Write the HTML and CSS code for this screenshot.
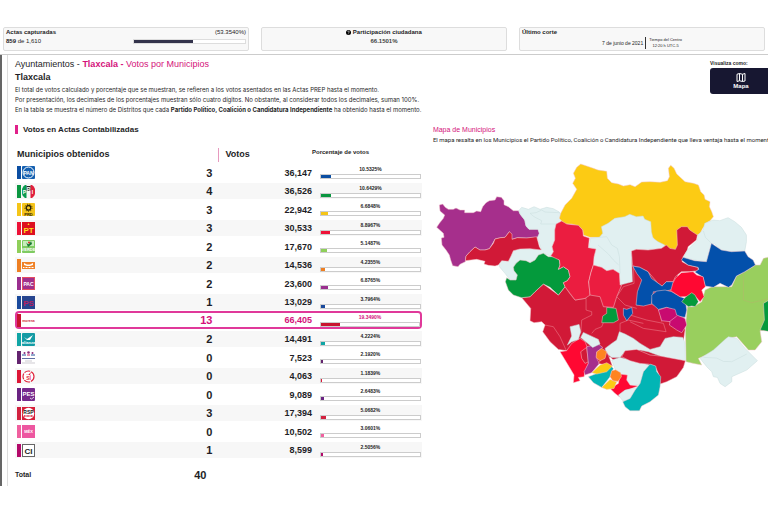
FILE: index.html
```html
<!DOCTYPE html>
<html lang="es">
<head>
    <meta charset="UTF-8">
    <meta name="viewport" content="width=device-width, initial-scale=1.0">
    <title>PREP Tlaxcala - Ayuntamientos</title>
    <link rel="stylesheet" href="styles.css">
</head>
<body>
    <header class="top-bar">
        <section class="card">
            <div class="card-row"><strong>Actas capturadas</strong><span>(53.3540%)</span></div>
            <div class="card-row">
                <span><strong>859</strong> de 1,610</span>
                <div class="progress"><div class="progress-fill" style="width: 53%"></div></div>
            </div>
        </section>
        <section class="card card-center">
            <strong><svg class="help" viewBox="0 0 12 12"><circle cx="6" cy="6" r="6"/><path d="M4 4.6c0-2.6 4-2.6 4 0C8 6 6 6 6 7.6M6 8.6v1.4" fill="none" stroke="#fff" stroke-width="1.5"/></svg> Participación ciudadana</strong>
            <strong class="soft">66.1501%</strong>
        </section>
        <section class="card">
            <strong>Último corte</strong>
            <div class="cut">
                <span>7 de junio de 2021</span>
                <span class="cut-time">Tiempo del Centro<br>12:20 h UTC-5</span>
            </div>
        </section>
    </header>

    <main class="page">
        <div class="content">
            <div class="intro">
                <div>
                    <h1>Ayuntamientos - <a href="#"><b>Tlaxcala -</b> Votos por Municipios</a></h1>
                    <h2>Tlaxcala</h2>
                    <p>El total de votos calculado y porcentaje que se muestran, se refieren a los votos asentados en las Actas PREP hasta el momento.</p>
                    <p>Por presentación, los decimales de los porcentajes muestran sólo cuatro dígitos. No obstante, al considerar todos los decimales, suman 100%.</p>
                    <p>En la tabla se muestra el número de Distritos que cada <b>Partido Político, Coalición o Candidatura Independiente</b> ha obtenido hasta el momento.</p>
                </div>
                <div class="view-as">
                    <span>Visualiza como:</span>
                    <button type="button" class="map-btn">
                        <svg viewBox="0 0 20 18" fill="none" stroke="#fff" stroke-width="2"><path d="M2 2.5 7 1l6 1.5L18 1v15l-5 1-6-1.500-5 1.500zM7 1v14.500M13 2.500v14.500"/></svg>
                        Mapa
                    </button>
                </div>
            </div>

            <div class="columns">
                <section>
                    <h3>Votos en Actas Contabilizadas</h3>
                    <table class="votes">
                        <colgroup><col class="col-party"><col class="col-won"><col class="col-total"><col></colgroup>
                        <thead>
                            <tr><th colspan="2">Municipios obtenidos</th><th class="th-votes">Votos</th><th class="th-pct">Porcentaje de votos</th></tr>
                        </thead>
                        <tbody>
                            <tr class="pan">
                                <td class="party"><i class="tag"></i><svg class="logo" viewBox="0 0 13 13"><rect width="13" height="13" rx="1" fill="#1560b0"/><circle cx="6.500" cy="6.500" r="5.500" fill="#1560b0" stroke="#fff"/><text x="6.500" y="8.500" font-size="5" fill="#fff">PAN</text></svg></td>
                                <td class="won">3</td><td class="total">36,147</td>
                                <td class="share"><span>10.5325%</span><div class="bar"><div class="fill" style="width: 10.5%"></div></div></td>
                            </tr>
                            <tr class="pri">
                                <td class="party"><i class="tag"></i><svg class="logo" viewBox="0 0 13 13"><path d="M4.500 0H3a8 8 0 0 0 0 13h1.500z" fill="#0a9b50"/><path d="M8.500 0H10a8 8 0 0 1 0 13H8.500z" fill="#e0203c"/><path d="M4.500 1h4v5h-4z" fill="#222"/><text x="2.500" y="9" font-size="5" fill="#fff">P</text><text x="6.500" y="5.500" font-size="5" fill="#fff">R</text><text x="10.500" y="9" font-size="5" fill="#fff">I</text></svg></td>
                                <td class="won">4</td><td class="total">36,526</td>
                                <td class="share"><span>10.6429%</span><div class="bar"><div class="fill" style="width: 10.6%"></div></div></td>
                            </tr>
                            <tr class="prd">
                                <td class="party"><i class="tag"></i><svg class="logo" viewBox="0 0 13 13"><rect width="13" height="13" rx="1" fill="#f5c41c"/><circle cx="6.500" cy="4.800" r="2.300" fill="none" stroke="#2c2408" stroke-width="1.300"/><circle cx="6.500" cy="4.800" r="3.600" fill="none" stroke="#2c2408" stroke-width="1" stroke-dasharray="1 1.500"/><text x="6.500" y="12.500" font-size="4" fill="#2c2408">PRD</text></svg></td>
                                <td class="won">3</td><td class="total">22,942</td>
                                <td class="share"><span>6.6848%</span><div class="bar"><div class="fill" style="width: 6.6%"></div></div></td>
                            </tr>
                            <tr class="pt">
                                <td class="party"><i class="tag"></i><svg class="logo" viewBox="0 0 13 13"><rect width="13" height="13" fill="#dd1020"/><path d="m6.500 1 1 2h-2z" fill="#ffdf20"/><text x="6.500" y="10.500" font-size="8" fill="#ffdf20">PT</text></svg></td>
                                <td class="won">3</td><td class="total">30,533</td>
                                <td class="share"><span>8.8967%</span><div class="bar"><div class="fill" style="width: 8.9%"></div></div></td>
                            </tr>
                            <tr class="pvem">
                                <td class="party"><i class="tag"></i><svg class="logo" viewBox="0 0 13 13"><rect width="13" height="13" rx="1" fill="#7fcb62"/><path d="M1 1h11v5H1z" fill="#c7edbb"/><path d="M4 2c2 3 3 3 5-1l1 3-4 3z" fill="#187a32"/><circle cx="7" cy="2.500" r="1" fill="#d22"/><text x="6.500" y="11" font-size="4" fill="#fff">VERDE</text></svg></td>
                                <td class="won">2</td><td class="total">17,670</td>
                                <td class="share"><span>5.1487%</span><div class="bar"><div class="fill" style="width: 5.6%"></div></div></td>
                            </tr>
                            <tr class="mc">
                                <td class="party"><i class="tag"></i><svg class="logo" viewBox="0 0 13 13"><rect y="3" width="13" height="7" fill="#f08228"/><path d="m2 4 3 1.500h3L11 4v2L8 7H5L2 6z" fill="#fff"/><path d="M1 8.500h11" stroke="#fff" stroke-dasharray="1 .5"/></svg></td>
                                <td class="won">2</td><td class="total">14,536</td>
                                <td class="share"><span>4.2355%</span><div class="bar"><div class="fill" style="width: 4.2%"></div></div></td>
                            </tr>
                            <tr class="pac">
                                <td class="party"><i class="tag"></i><svg class="logo" viewBox="0 0 13 13"><rect x=".5" y=".5" width="12" height="12" fill="#a0308c" stroke="#e44b62"/><text x="6.500" y="8.500" font-size="5" fill="#fff">PAC</text></svg></td>
                                <td class="won">2</td><td class="total">23,600</td>
                                <td class="share"><span>6.8765%</span><div class="bar"><div class="fill" style="width: 7%"></div></div></td>
                            </tr>
                            <tr class="ps">
                                <td class="party"><i class="tag"></i><svg class="logo" viewBox="0 0 13 13"><rect width="13" height="13" fill="#27458f"/><text x="6.500" y="9.500" font-size="8" fill="#b81f60">PS</text></svg></td>
                                <td class="won">1</td><td class="total">13,029</td>
                                <td class="share"><span>3.7964%</span><div class="bar"><div class="fill" style="width: 4%"></div></div></td>
                            </tr>
                            <tr class="morena leader">
                                <td class="party"><i class="tag"></i><svg class="logo" viewBox="0 0 13 13"><text x="6.500" y="8" font-size="3.500" fill="#d01c38">morena</text></svg></td>
                                <td class="won">13</td><td class="total">66,405</td>
                                <td class="share"><span>19.3490%</span><div class="bar"><div class="fill" style="width: 19.3%"></div></div></td>
                            </tr>
                            <tr class="na">
                                <td class="party"><i class="tag"></i><svg class="logo" viewBox="0 0 13 13"><rect width="13" height="13" rx="1" fill="#149ba4"/><path d="m2 4 3 2 6-4-3 5H5z" fill="#fff"/><text x="6.500" y="11" font-size="4" fill="#fff">alianza</text></svg></td>
                                <td class="won">2</td><td class="total">14,491</td>
                                <td class="share"><span>4.2224%</span><div class="bar"><div class="fill" style="width: 4.2%"></div></div></td>
                            </tr>
                            <tr class="iscc">
                                <td class="party"><i class="tag"></i><svg class="logo" viewBox="0 0 13 13"><g fill="#8c2c7c"><circle cx="2.500" cy="2" r="1"/><circle cx="6.500" cy="1.500" r="1.300"/><circle cx="10.500" cy="2" r="1"/></g><path d="M0 4h4M9 4h4" stroke="#23509a"/><path d="M5 4h3" stroke="#d02060"/><path d="M0 7.500h13" stroke="#6270a4"/><path d="M3 10h7M0 12h13" stroke="#b9b4bd" stroke-width=".7"/></svg></td>
                                <td class="won">0</td><td class="total">7,523</td>
                                <td class="share"><span>2.1920%</span><div class="bar"><div class="fill" style="width: 2.2%"></div></div></td>
                            </tr>
                            <tr class="rsp">
                                <td class="party"><i class="tag"></i><svg class="logo" viewBox="0 0 13 13"><circle cx="6.500" cy="6.500" r="5.500" fill="#fff" stroke="#e0243c" stroke-width="1.200" stroke-dasharray="6 1"/><path d="m4 4 2 1 3-3-1 3H5z" fill="#e0243c"/><text x="6.500" y="9.800" font-size="5" fill="#e0243c">SÍ</text></svg></td>
                                <td class="won">0</td><td class="total">4,063</td>
                                <td class="share"><span>1.1839%</span><div class="bar"><div class="fill" style="width: 1.3%"></div></div></td>
                            </tr>
                            <tr class="pes">
                                <td class="party"><i class="tag"></i><svg class="logo" viewBox="0 0 13 13"><rect width="13" height="13" rx="1" fill="#762a8c"/><text x="6.500" y="8" font-size="6" fill="#fff">PES</text><path d="m8 10 1.500 1L12 9" fill="none" stroke="#fff" stroke-width=".8"/></svg></td>
                                <td class="won">0</td><td class="total">9,089</td>
                                <td class="share"><span>2.6483%</span><div class="bar"><div class="fill" style="width: 2.6%"></div></div></td>
                            </tr>
                            <tr class="redes">
                                <td class="party"><i class="tag"></i><svg class="logo" viewBox="0 0 13 13"><rect width="13" height="13" fill="#d8203a"/><circle cx="6.500" cy="6.500" r="5.700" fill="#fff"/><text x="6.500" y="6.500" font-size="5" fill="#222">RSP</text><path d="M2 9h9" stroke="#d8203a" stroke-width="1.500" stroke-dasharray="1 .4"/></svg></td>
                                <td class="won">3</td><td class="total">17,394</td>
                                <td class="share"><span>5.0682%</span><div class="bar"><div class="fill" style="width: 5%"></div></div></td>
                            </tr>
                            <tr class="fxm">
                                <td class="party"><i class="tag"></i><svg class="logo" viewBox="0 0 13 13"><rect width="13" height="13" fill="#ed57a0"/><text x="6.500" y="8" font-size="4" fill="#fff">MÉX</text></svg></td>
                                <td class="won">0</td><td class="total">10,502</td>
                                <td class="share"><span>3.0601%</span><div class="bar"><div class="fill" style="width: 3.2%"></div></div></td>
                            </tr>
                            <tr class="ci">
                                <td class="party"><i class="tag"></i><svg class="logo" viewBox="0 0 13 13"><rect x=".5" y=".5" width="12" height="12" fill="#fff" stroke="#666"/><text x="6.500" y="9.500" font-size="8" fill="#222">CI</text></svg></td>
                                <td class="won">1</td><td class="total">8,599</td>
                                <td class="share"><span>2.5056%</span><div class="bar"><div class="fill" style="width: 2.5%"></div></div></td>
                            </tr>
                        </tbody>
                        <tfoot>
                            <tr><th>Total</th><td class="won">40</td><td></td><td></td></tr>
                        </tfoot>
                    </table>
                </section>

                <section class="map-panel">
                    <h4>Mapa de Municipios</h4>
                    <p>El mapa resalta en los Municipios el Partido Político, Coalición o Candidatura Independiente que lleva ventaja hasta el momento.</p>
                    <svg class="map" viewBox="9 0 1005 795" role="img" aria-label="Mapa de Municipios">
                        <!-- central municipalities -->
                        <path class="m-dark" d="M275 443 302 475 300 512 312 518 335 515 345 525 338 545 360 575 385 598 410 602 450 640 480 660 540 620 560 640 680 650 750 640 762 560 765 540 750 400 720 300 605 300 600 395 480 400 405 410 385 435 340 402 315 425 300 440z"/>
                        <path class="m-dark line" d="M405 410 420 432 435 450 468 445 468 480 485 485 485 495 455 510 452 550M485 550 495 538 515 530 520 518M345 525 370 530 390 560 408 600M560 440 585 465 620 475M570 545 570 520 595 510 640 520M620 465 650 458 685 470 695 515M600 495 650 510 700 520 708 545 640 535 600 515M610 348 612 400 580 410 560 440"/>
                        <!-- north -->
                        <path class="m-purple" d="M28 165 38 162 46 172 55 178 70 178 78 174 90 180 104 180 104 188 130 188 140 183 152 185 158 170 168 158 178 152 195 150 200 140 214 142 222 152 222 164 235 170 250 182 266 182 270 192 284 210 288 228 297 238 324 238 328 250 326 262 290 264 262 263 246 268 238 245 225 262 212 263 195 267 188 280 178 296 165 300 150 300 135 291 120 305 108 318 106 335 90 343 84 350 68 347 62 330 58 315 48 300 36 285 34 264 42 262 40 250 20 232 28 220 40 205 44 195 30 183z"/>
                        <path class="m-pale" d="M266 182 275 172 295 178 312 170 330 178 350 172 370 176 388 186 398 205 400 216 378 222 374 240 374 270 366 290 370 305 362 318 340 310 328 316 315 330 300 338 270 330 255 340 250 355 262 375 258 390 240 390 225 370 208 350 207 330 235 330 243 318 250 302 270 297 334 298 322 262 328 250 324 238 297 238 288 228 284 210 270 192z"/>
                        <path class="m-pale line" d="M388 188 345 186 335 180 318 188 300 190 312 200 335 212 332 222 385 222"/>
                        <path class="m-dark" d="M106 332 108 318 120 305 135 291 150 300 165 300 178 296 190 280 195 267 212 263 225 262 238 245 246 252 246 268 262 263 290 264 320 260 324 275 328 290 334 300 300 296 270 297 250 302 243 318 235 334 215 332 205 345 195 348 175 346 162 342 165 334 140 328z"/>
                        <path class="m-green" d="M250 352 258 340 270 330 288 332 300 338 315 330 325 315 340 310 355 320 375 320 388 330 390 345 385 358 400 350 415 360 420 380 412 392 400 398 405 410 385 435 360 412 340 402 315 425 300 440 275 443 250 435 235 420 226 395 230 383 240 390 258 390 262 375 252 362z"/>
                        <path class="m-yellow" d="M392 190 405 165 425 145 440 118 428 100 436 85 430 70 440 52 452 42 470 48 490 55 504 60 530 64 532 85 545 98 565 102 580 108 600 104 615 110 635 96 660 95 690 97 712 92 718 80 715 55 722 46 732 55 740 72 765 95 790 100 805 105 812 125 822 135 825 148 840 155 838 170 845 185 850 200 840 212 830 218 818 235 810 250 790 262 735 300 715 295 700 290 680 275 668 262 640 260 520 262 480 262 460 255 458 240 445 228 425 222 402 222 388 205z"/>
                        <path class="m-pale" d="M514 230 534 220 554 205 584 200 599 193 619 200 639 198 644 208 662 215 664 245 669 265 684 275 704 285 700 295 654 298 614 298 604 310 607 395 589 400 570 405 568 370 549 358 530 362 515 352 498 350 488 345 490 325 498 297 476 292 482 264 508 262 518 250z"/>
                        <path class="m-pale line" d="M508 262 530 260 545 285 562 295 568 320 570 370M504 285 535 312 550 330 566 345"/>
                        <path class="m-red" d="M378 222 395 213 410 222 445 226 458 240 460 258 478 264 475 293 498 297 492 320 490 345 482 370 476 395 480 435 465 445 435 450 420 430 405 410 400 398 412 392 420 380 415 360 400 350 385 358 390 345 388 330 362 318 370 305 366 290 374 270 374 240z"/>
                        <path class="m-red" d="M490 345 515 352 530 362 549 358 568 370 570 405 575 405 560 440 550 472 520 470 510 440 480 435 476 395 482 370z"/>
                        <path class="m-dark" d="M604 303 619 298 654 300 694 295 709 285 719 295 736 298 742 285 740 240 754 230 772 230 779 240 802 255 799 270 774 290 772 300 759 320 756 335 774 345 804 352 804 362 779 365 754 365 736 380 729 395 709 395 696 408 684 400 654 365 629 352 608 348z"/>
                        <path class="m-pale" d="M849 210 869 212 894 203 914 215 934 232 949 255 949 275 944 303 904 305 874 300 852 280 844 285 829 335 794 330 760 322 772 300 802 270 804 255 819 240 824 220z"/>
                        <path class="m-pale line" d="M820 243 826 262 846 282"/>
                        <!-- east -->
                        <path class="m-lime" d="M768 510 772 470 790 470 815 455 825 420 845 410 905 410 919 378 944 365 976 345 990 345 1000 325 1020 320 1020 540 990 542 995 575 975 600 955 600 920 560 890 565 850 605 805 625 815 645 790 640 768 635 766 540z"/>
                        <path class="m-lime line" d="M940 365 940 450 965 458 1020 445"/>
                        <path class="m-green" d="M1000 460 1020 448 1020 545 990 540 1003 510z"/>
                        <path class="m-blue" d="M608 348 629 352 654 365 664 385 696 408 709 395 730 395 728 418 700 425 670 425 664 462 640 468 618 465 622 425 635 390 620 370z"/>
                        <path class="m-blue" d="M665 435 680 423 705 420 725 425 750 440 765 445 770 480 765 502 740 498 730 480 710 472 685 478 665 460z"/>
                        <path class="m-blue" d="M754 330 759 322 794 332 829 335 844 280 874 300 904 305 944 303 954 320 969 330 976 345 944 365 919 378 905 405 895 412 870 400 850 412 825 408 819 382 794 366 806 358 804 352 774 345z"/>
                        <path class="m-bright" d="M736 385 754 368 789 365 800 375 819 380 826 410 815 420 822 440 810 455 792 435 770 440 750 440 722 422 728 400z"/>
                        <path class="m-green" d="M755 455 765 442 785 428 795 435 805 455 795 470 785 468 775 470z"/>
                        <path class="m-magenta" d="M685 480 710 472 735 478 740 495 765 505 770 525 755 548 740 540 718 525 720 515 695 512z"/>
                        <path class="m-magenta line" d="M718 515 740 498"/>
                        <path class="m-green" d="M530 472 558 475 565 510 550 518 515 518 518 498 530 490z"/>
                        <path class="m-blue" d="M580 475 590 478 605 472 608 490 590 512 580 495z"/>
                        <!-- south -->
                        <path class="m-pale" d="M810 625 850 600 885 568 895 560 920 565 945 595 982 632 950 660 905 680 905 695 885 710 870 700 862 682 850 680 845 665 830 650z"/>
                        <path class="m-pale line" d="M820 622 860 624 880 634 905 635 950 612"/>
                        <path class="m-pale" d="M525 595 545 580 560 570 568 545 585 552 610 565 630 580 660 598 690 590 705 565 730 560 758 562 765 580 766 632 730 628 690 618 655 605 630 600 585 603 570 622 545 622 530 610z"/>
                        <path class="m-pale" d="M545 630 570 622 600 630 640 640 658 645 650 665 635 700 600 710 580 690 560 670z"/>
                        <path class="m-dark" d="M575 620 585 602 620 598 660 615 690 618 766 632 760 652 740 680 710 695 690 702 685 670 675 648 655 642 630 640 600 632z"/>
                        <path class="m-bright" d="M540 715 565 700 570 672 592 675 590 690 600 705 625 708 585 722 568 740 555 730z"/>
                        <path class="m-pale" d="M565 735 585 720 625 712 612 740 595 755 578 752z"/>
                        <path class="m-teal" d="M660 642 677 648 680 665 692 680 690 710 685 735 660 755 635 768 628 782 600 782 585 770 578 755 600 745 615 720 630 700 640 665z"/>
                        <path class="m-bright" d="M410 602 425 580 450 565 465 575 475 600 475 640 465 665 462 680 445 682 450 692 430 698 432 675 405 630 390 605z"/>
                        <path class="m-dark" d="M455 625 452 605 470 592 475 635 465 640z"/>
                        <path class="m-purple" d="M470 590 505 582 518 592 500 606 500 625 508 640 485 668 465 675 462 665 475 640z"/>
                        <path class="m-dark" d="M505 640 530 605 540 628 547 648 525 645z"/>
                        <path class="m-orange" d="M500 605 515 595 530 605 525 625 510 632 498 622z"/>
                        <path class="m-teal" d="M475 680 500 670 540 645 550 655 540 680 515 712 490 698z"/>
                        <path class="m-yellow" d="M485 668 510 645 530 638 547 648 530 665 500 672z"/>
                        <path class="m-yellow" d="M515 712 540 688 560 695 552 715 530 718z"/>
                        <path class="m-orange" d="M545 662 557 659 572 668 574 680 564 694 548 692 540 680z"/>
                        <path class="m-pale" d="M412 585 425 558 420 530 447 523 452 545 445 568 425 575z"/>
                        <path class="m-pale" d="M452 562 460 547 505 568 510 582 488 592z"/>
                    </svg>
                </section>
            </div>
        </div>
    </main>
</body>
</html>
```
FILE: styles.css
```css
/* General Styles */
* {
    box-sizing: border-box;
}

body {
    margin: 0;
    padding: 27px 0 0;
    background: #fff;
    color: #1e1e26;
    font-family: "Liberation Sans", Arial, sans-serif;
    font-size: 7px;
    line-height: 10px;
    overflow-x: hidden;
}

h1, h2, h3, h4, p {
    margin: 0;
}

a {
    text-decoration: none;
}

/* Top cards */
.top-bar {
    display: grid;
    grid-template-columns: repeat(3, 1fr);
    gap: 12px;
    padding: 0 3px 3px;
    border-bottom: 1px solid #ccc;
    font-size: 6px;
    line-height: 9px;
}

.card {
    height: 24px;
    padding: 0 2px;
    background: #f8f8f8;
    border: 1px solid #ddd;
    border-radius: 2px;
}

.card-row {
    display: flex;
    justify-content: space-between;
    align-items: center;
}

.card-center {
    display: flex;
    flex-direction: column;
    align-items: center;
}

.soft {
    color: #444;
}

.help {
    width: 5px;
    height: 5px;
    vertical-align: -1px;
}

.progress {
    width: 47%;
    height: 5px;
    border: 1px solid #ddd;
    background: #fff;
}

.progress-fill {
    height: 100%;
    background: #34344c;
}

.cut {
    display: flex;
    justify-content: center;
    align-items: center;
    gap: 2px;
    font-size: 5px;
}

.cut-time {
    padding-left: 3px;
    border-left: 1px solid #333;
    font-size: 4px;
    line-height: 6px;
    text-align: center;
}

/* Page body */
.page {
    border-left: 2px solid #666;
    padding-left: 5px;
}

.content {
    border-left: 1px solid #ddd;
    padding: 3px 0 0 7px;
}

.intro {
    display: flex;
    justify-content: space-between;
}

.intro p {
    font-family: Inter, sans-serif;
    font-size: 6px;
}

h1 {
    font-size: 9px;
    line-height: 12px;
    font-weight: normal;
}

h1 a, h4 {
    color: #d4127a;
}

h2 {
    font-size: 9px;
    line-height: 15px;
}

.view-as {
    flex: none;
    width: 62px;
    margin-right: -4px;
    font-size: 5px;
    font-weight: bold;
}

.map-btn {
    display: flex;
    flex-direction: column;
    align-items: center;
    justify-content: center;
    width: 100%;
    height: 26px;
    padding: 0;
    border: none;
    border-radius: 3px;
    background: #171731;
    color: #fff;
    font: bold 6px/8px "Liberation Sans", Arial, sans-serif;
    cursor: pointer;
}

.map-btn svg {
    width: 10px;
    height: 9px;
}

.columns {
    display: grid;
    grid-template-columns: 17fr 14fr;
    gap: 11px;
    padding-top: 10px;
}

h3 {
    padding-left: 5px;
    border-left: 3px solid #e0218a;
    font-size: 8px;
    line-height: 9px;
}

/* Votes table */
.votes {
    width: 100%;
    margin-top: 11px;
    border-collapse: separate;
    border-spacing: 0;
    table-layout: fixed;
}

.col-party {
    width: 30%;
}

.col-won {
    width: 20%;
}

.col-total {
    width: 23%;
}

.votes th,
.votes td {
    padding: 0;
    vertical-align: middle;
}

.votes th {
    text-align: left;
}

.votes thead th {
    height: 18px;
    padding-left: 2px;
    font-size: 9px;
}

.votes thead .th-votes {
    padding-left: 7px;
    background: linear-gradient(#e79abf, #e79abf) 0 3px / 1px 14px no-repeat;
}

.votes thead .th-pct {
    padding: 0 0 4px;
    font-size: 6px;
}

.votes tbody tr {
    height: 18px;
}

.votes tbody tr:nth-child(even) {
    height: 19px;
}

.votes tbody td {
    border-top: 2px solid #fff;
    border-bottom: 1px solid #fff;
}

.votes tbody tr:nth-child(even) td {
    background: #f7f7f7;
}

.votes .party {
    padding-left: 2px;
    font-size: 0;
    line-height: 0;
}

.tag {
    display: inline-block;
    width: 4px;
    height: 13px;
    margin-right: 1px;
    vertical-align: middle;
    background: var(--party);
}

.logo {
    width: 13px;
    height: 13px;
    vertical-align: middle;
}

.logo text {
    font-weight: bold;
    text-anchor: middle;
}

.votes .won {
    padding-right: 6px;
    font-size: 11px;
    font-weight: bold;
    text-align: right;
}

.votes .total {
    font-size: 9px;
    font-weight: bold;
    text-align: right;
}

.votes .share {
    padding: 0 1px 0 8px;
    font-size: 5px;
    line-height: 6px;
    font-weight: bold;
    text-align: center;
}

.share span {
    display: block;
}

.bar {
    height: 5px;
    margin-top: 2px;
    border: 1px solid #ccc;
    background: #fff;
}

.fill {
    height: 100%;
    background: var(--party);
}

.votes .leader td {
    border-top: 2px solid #e0399a;
    border-bottom: 2px solid #e0399a;
    color: #d4127a;
}

.votes .leader td:first-child {
    padding-left: 0;
    border-left: 2px solid #e0399a;
    border-radius: 4px 0 0 4px;
}

.votes .leader td:last-child {
    padding-right: 0;
    border-right: 2px solid #e0399a;
    border-radius: 0 4px 4px 0;
}

.votes tfoot tr {
    height: 27px;
}

.votes tfoot th {
    padding-top: 4px;
    font-size: 7px;
}

.votes tfoot .won {
    padding-top: 4px;
    padding-right: 12px;
}

/* Party colours */
.pan { --party: #0b4ea2; }
.pri { --party: #0a9640; }
.prd { --party: #f5c518; }
.pt { --party: #ee1238; }
.pvem { --party: #8fcf5a; }
.mc { --party: #ee7f22; }
.pac { --party: #9a2f8f; }
.ps { --party: #1a4a9c; }
.morena { --party: #c8142f; }
.na { --party: #10a5a5; }
.iscc { --party: #63246f; }
.rsp { --party: #dd1636; }
.pes { --party: #6a2382; }
.redes { --party: #d2213f; }
.fxm { --party: #f0609f; }
.ci { --party: #b3096a; }

/* Map */
.map-panel {
    min-width: 0;
}

h4 {
    font-size: 7px;
    line-height: 10px;
    font-weight: normal;
}

.map-panel p {
    font-family: Roboto, sans-serif;
    font-size: 6px;
    white-space: nowrap;
}

.map {
    display: block;
    width: 100%;
    margin-top: 5px;
    stroke: #f3c9cf;
    stroke-width: 1.5;
    stroke-linejoin: round;
}

.m-dark { fill: #d11937; }
.m-red { fill: #eb1d40; }
.m-bright { fill: #ff0832; }
.m-purple { fill: #a62f8c; }
.m-green { fill: #049a3c; }
.m-yellow { fill: #fccb14; }
.m-blue { fill: #0350ab; }
.m-lime { fill: #99cf5e; }
.m-teal { fill: #02b5b5; }
.m-magenta { fill: #c80a70; }
.m-orange { fill: #ff8420; }
.m-pale { fill: #e1f0f1; stroke: #c9dcdd; }

.line {
    fill: none;
}

.m-dark.line { stroke: #f08a96; }
.m-lime.line { stroke: #b5b56a; }
```
